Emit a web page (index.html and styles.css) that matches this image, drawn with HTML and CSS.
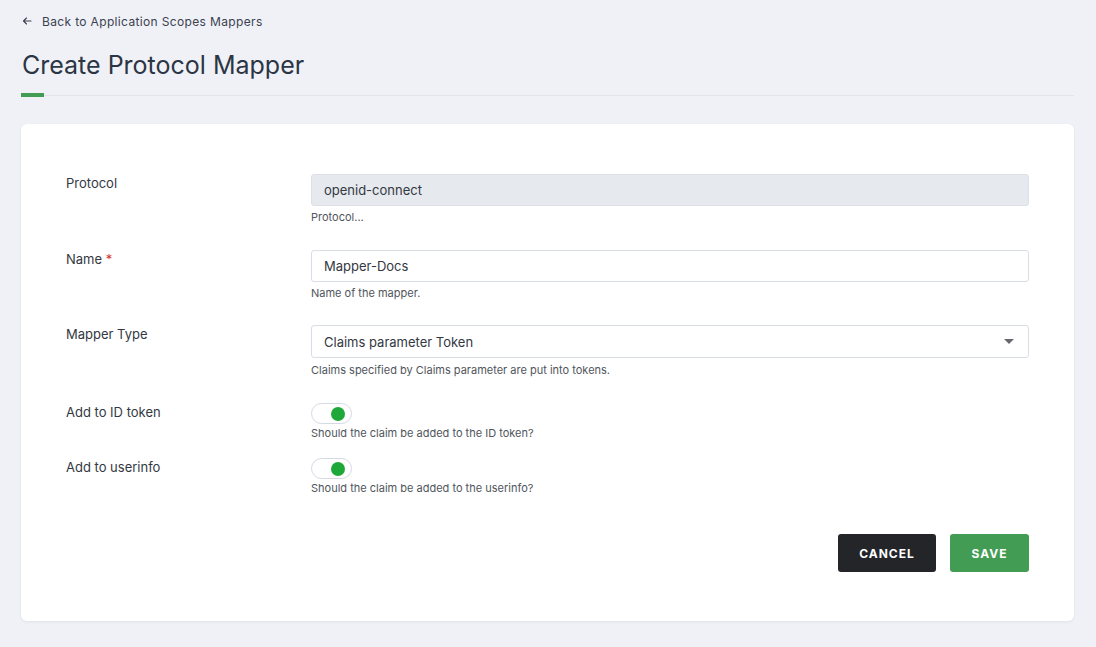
FILE: index.html
```html
<!DOCTYPE html>
<html lang="en">
<head>
<meta charset="utf-8">
<title>Create Protocol Mapper</title>
<link rel="stylesheet" href="styles.css">
</head>
<body>
<div class="page">
  <a class="back" href="#">
    <svg class="back-icon" width="10" height="10" viewBox="0 0 10 10"><path d="M9 5H1.5M4.5 2L1.5 5l3 3" fill="none" stroke="#3a4150" stroke-width="1.1" stroke-linecap="round" stroke-linejoin="round"/></svg>
    <span>Back to Application Scopes Mappers</span>
  </a>
  <h1 class="title">Create Protocol Mapper</h1>
  <div class="rule"><div class="rule-accent"></div><div class="rule-line"></div></div>

  <div class="card">
    <div class="row">
      <div class="label">Protocol</div>
      <div class="field">
        <div class="input disabled">openid-connect</div>
        <div class="help">Protocol...</div>
      </div>
    </div>
    <div class="row row-name">
      <div class="label">Name <span class="req">*</span></div>
      <div class="field">
        <div class="input">Mapper-Docs</div>
        <div class="help">Name of the mapper.</div>
      </div>
    </div>
    <div class="row row-type">
      <div class="label">Mapper Type</div>
      <div class="field">
        <div class="input select"><span>Claims parameter Token</span><span class="caret"></span></div>
        <div class="help">Claims specified by Claims parameter are put into tokens.</div>
      </div>
    </div>
    <div class="row toggle-row">
      <div class="label">Add to ID token</div>
      <div class="field">
        <div class="toggle"><span class="knob"></span></div>
        <div class="help">Should the claim be added to the ID token?</div>
      </div>
    </div>
    <div class="row toggle-row last">
      <div class="label">Add to userinfo</div>
      <div class="field">
        <div class="toggle"><span class="knob"></span></div>
        <div class="help">Should the claim be added to the userinfo?</div>
      </div>
    </div>
    <div class="actions">
      <button class="btn btn-cancel">CANCEL</button>
      <button class="btn btn-save">SAVE</button>
    </div>
  </div>
</div>
</body>
</html>
```
FILE: styles.css
```css
* { box-sizing: border-box; }
html, body { margin: 0; padding: 0; }
body {
  background: #f0f1f6;
  font-family: Inter, "Noto Sans", "Liberation Sans", sans-serif;
  color: #2a3442;
}
.page {
  padding: 12px 22px 26px 21px;
}
.back {
  display: flex;
  align-items: center;
  gap: 10px;
  height: 18px;
  padding-left: 1px;
  color: #3a4150;
  text-decoration: none;
  font-size: 12px;
  letter-spacing: 0.35px;
}
.back-icon { display: block; }
.title {
  margin: 19px 0 12px 1px;
  font-size: 25px;
  line-height: 32px;
  font-weight: 400;
  color: #2b3544;
}
.rule {
  display: flex;
  align-items: center;
  height: 4px;
}
.rule-accent {
  width: 23px;
  height: 4px;
  background: #439c53;
}
.rule-line {
  flex: 1;
  height: 1px;
  background: #e2e4ea;
}
.card {
  margin-top: 27px;
  background: #ffffff;
  border-radius: 6px;
  box-shadow: 0 1px 3px rgba(40, 50, 90, 0.08);
  padding: 50px 45px 49px 45px;
}
.row {
  display: flex;
  margin-bottom: 26px;
}
.row.row-name { margin-bottom: 25px; }
.row.row-type { margin-bottom: 26px; }
.row.toggle-row { margin-bottom: 18px; }
.row.last { margin-bottom: 0; }
.label {
  width: 245px;
  flex-shrink: 0;
  font-size: 13px;
  line-height: 18px;
  color: #333842;
}
.req { color: #d8332c; }
.field { flex: 1; }
.input {
  height: 32px;
  border: 1px solid #d8dde6;
  border-radius: 3px;
  padding: 0 12px;
  display: flex;
  align-items: center;
  font-size: 13px;
  color: #333842;
  background: #fff;
}
.input.disabled {
  background: #e6e9ed;
  border-color: #dde1e7;
}
.input.select {
  height: 33px;
  justify-content: space-between;
}
.caret {
  width: 0;
  height: 0;
  border-left: 5px solid transparent;
  border-right: 5px solid transparent;
  border-top: 5px solid #666a70;
  margin-right: 2px;
}
.help {
  margin-top: 4px;
  font-size: 11px;
  line-height: 14px;
  color: #50555c;
}
.row-type .help { margin-top: 5px; }
.toggle {
  width: 41px;
  height: 21px;
  border: 1px solid #d5d9e3;
  border-radius: 11px;
  background: #fff;
  display: flex;
  align-items: center;
  justify-content: flex-end;
  padding-right: 6px;
}
.knob {
  width: 14px;
  height: 14px;
  border-radius: 50%;
  background: #1fa83a;
}
.toggle-row .help { margin-top: 2px; }
.actions {
  display: flex;
  justify-content: flex-end;
  gap: 14px;
  margin-top: 39px;
}
.btn {
  height: 38px;
  border: none;
  border-radius: 3px;
  color: #fff;
  font-family: Inter, "Noto Sans", "Liberation Sans", sans-serif;
  font-size: 12px;
  font-weight: 700;
  letter-spacing: 1px;
  cursor: pointer;
}
.btn-cancel {
  width: 98px;
  background: #242528;
}
.btn-save {
  width: 79px;
  background: #439c53;
}
```
